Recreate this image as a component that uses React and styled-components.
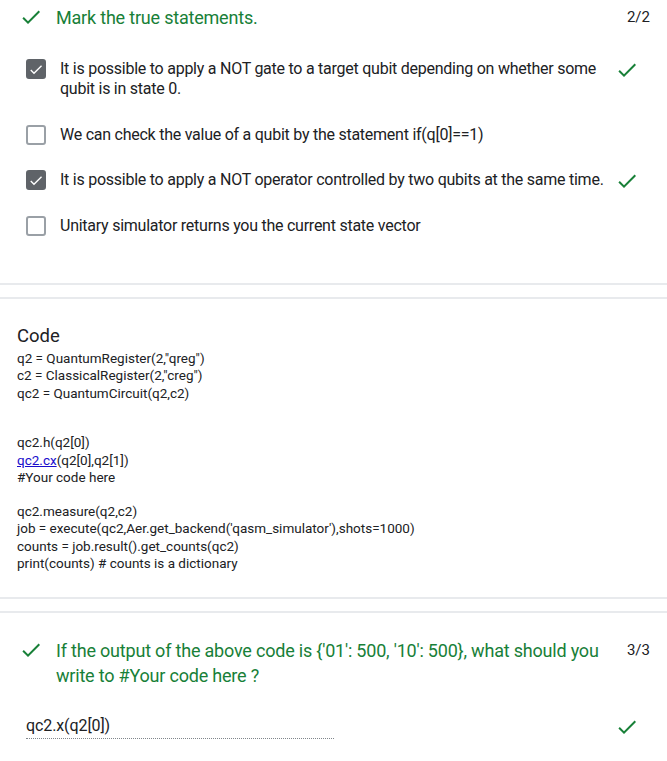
import React from 'react'
import styled, { createGlobalStyle } from 'styled-components'

const GlobalStyle = createGlobalStyle`
  html, body {
    margin: 0;
    padding: 0;
    background: #fff;
  }
  body {
    font-family: Roboto, "Noto Sans", Arial, sans-serif;
    color: #202124;
  }
`

const GREEN = '#188038'

const options = [
  {
    text: 'It is possible to apply a NOT gate to a target qubit depending on whether some qubit is in state 0.',
    checked: true,
    correct: true,
  },
  { text: 'We can check the value of a qubit by the statement if(q[0]==1)', checked: false },
  {
    text: 'It is possible to apply a NOT operator controlled by two qubits at the same time.',
    checked: true,
    correct: true,
  },
  { text: 'Unitary simulator returns you the current state vector', checked: false },
]

const code = [
  'q2 = QuantumRegister(2,"qreg")',
  'c2 = ClassicalRegister(2,"creg")',
  'qc2 = QuantumCircuit(q2,c2)',
  '',
  '',
  'qc2.h(q2[0])',
  'LINK',
  '#Your code here',
  '',
  'qc2.measure(q2,c2)',
  "job = execute(qc2,Aer.get_backend('qasm_simulator'),shots=1000)",
  'counts = job.result().get_counts(qc2)',
  'print(counts) # counts is a dictionary',
]

const Done = ({ size = 24, color = GREEN }) => (
  <svg width={size} height={size} viewBox="0 0 24 24" fill={color}>
    <path d="M9 16.17L4.83 12l-1.42 1.41L9 19 21 7l-1.41-1.41z" />
  </svg>
)

export default function App() {
  return (
    <Page>
      <GlobalStyle />
      <Card $pad="5px 17px 47px 19px">
        <Header>
          <IconSlot>
            <Done />
          </IconSlot>
          <Title>Mark the true statements.</Title>
          <Score>2/2</Score>
        </Header>
        <OptionList>
          {options.map((o, i) => (
            <Option key={i}>
              <Box $checked={o.checked}>{o.checked && <Done size={17} color="#fff" />}</Box>
              <OptionText>{o.text}</OptionText>
              <Mark>{o.correct && <Done />}</Mark>
            </Option>
          ))}
        </OptionList>
      </Card>

      <Card $pad="25px 17px 24px 17px">
        <CodeTitle>Code</CodeTitle>
        <CodeBlock>
          {code.map((line, i) =>
            line === 'LINK' ? (
              <CodeLine key={i}>
                <CodeLink>qc2.cx</CodeLink>(q2[0],q2[1])
              </CodeLine>
            ) : line ? (
              <CodeLine key={i}>{line}</CodeLine>
            ) : (
              <BlankLine key={i} />
            )
          )}
        </CodeBlock>
      </Card>

      <Card $pad="25px 17px 30px 19px" $last>
        <Header>
          <IconSlot>
            <Done />
          </IconSlot>
          <Title>{"If the output of the above code is {'01': 500, '10': 500}, what should you write to #Your code here ?"}</Title>
          <Score>3/3</Score>
        </Header>
        <AnswerRow>
          <Answer>qc2.x(q2[0])</Answer>
          <Mark>
            <Done />
          </Mark>
        </AnswerRow>
      </Card>
    </Page>
  )
}

const Page = styled.div`
  width: 667px;
  display: flex;
  flex-direction: column;
  gap: 12px;
`

const Card = styled.section`
  padding: ${(p) => p.$pad};
  border-bottom: ${(p) => (p.$last ? 'none' : '2px solid #e8eaed')};
  border-top: 2px solid #e8eaed;

  &:first-child {
    border-top: none;
  }
`

const Header = styled.div`
  display: flex;
  align-items: flex-start;
`

const IconSlot = styled.div`
  width: 24px;
  height: 24px;
  flex: none;
`

const Title = styled.div`
  flex: 1;
  margin-left: 13px;
  font-size: 18px;
  letter-spacing: -0.2px;
  line-height: 25px;
  color: ${GREEN};
  padding-right: 12px;
`

const Score = styled.div`
  flex: none;
  font-size: 15px;
  line-height: 25px;
  color: #202124;
`

const OptionList = styled.div`
  display: flex;
  flex-direction: column;
  gap: 25.5px;
  margin-top: 29px;
  padding-left: 7px;
`

const Option = styled.div`
  display: flex;
  align-items: flex-start;
`

const Box = styled.div`
  flex: none;
  box-sizing: border-box;
  width: 20px;
  height: 20px;
  border-radius: 3px;
  display: flex;
  align-items: center;
  justify-content: center;
  background: ${(p) => (p.$checked ? '#5f6368' : '#fff')};
  border: 2px solid ${(p) => (p.$checked ? '#5f6368' : '#9aa0a6')};
`

const OptionText = styled.div`
  flex: 1;
  margin-left: 14px;
  font-size: 16px;
  letter-spacing: -0.25px;
  line-height: 20px;
  color: #202124;
`

const Mark = styled.div`
  flex: none;
  width: 24px;
  height: 20px;
  margin: 0 11px 0 4px;

  svg {
    display: block;
    margin-top: -1px;
  }
`

const CodeTitle = styled.div`
  font-size: 18.5px;
  line-height: 24px;
  margin-bottom: 2px;
  color: #202124;
`

const CodeBlock = styled.div`
  font-size: 13.5px;
  line-height: 17.5px;
  color: #202124;
`

const CodeLine = styled.div`
  white-space: pre;
`

const BlankLine = styled.div`
  height: 16px;
`

const CodeLink = styled.span`
  color: #1a0dcc;
  text-decoration: underline;
`

const AnswerRow = styled.div`
  display: flex;
  align-items: flex-start;
  justify-content: space-between;
  margin-top: 28px;
  padding-left: 7px;
`

const Answer = styled.div`
  width: 308px;
  font-size: 16px;
  letter-spacing: -0.1px;
  line-height: 20px;
  padding-bottom: 2px;
  border-bottom: 1px dotted #80868b;
`
